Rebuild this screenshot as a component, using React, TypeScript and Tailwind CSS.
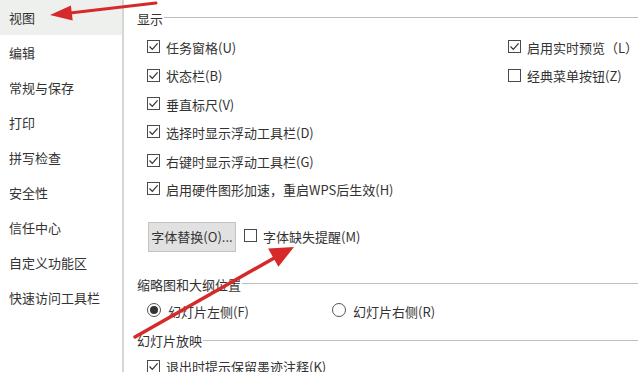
import React from "react";

const FONT = { fontFamily: '"Noto Sans CJK SC", "Noto Sans", sans-serif' };

function Check({ checked }: { checked: boolean }) {
  return (
    <span className="w-[13px] h-[13px] border border-[#4a4a4a] bg-white flex items-center justify-center shrink-0 relative -top-[1px]">
      {checked && (
        <svg width="11" height="11" viewBox="0 0 11 11">
          <path d="M1.5 5.5 L4.3 8.3 L9.6 2.3" fill="none" stroke="#333" strokeWidth="1.2" />
        </svg>
      )}
    </span>
  );
}

function Radio({ checked }: { checked: boolean }) {
  return (
    <span className="w-[14px] h-[14px] rounded-full border border-[#555] bg-white flex items-center justify-center shrink-0 relative -top-[1px]">
      {checked && <span className="w-[8px] h-[8px] rounded-full bg-[#333]" />}
    </span>
  );
}

function CheckRow({ label, checked = true }: { label: string; checked?: boolean }) {
  return (
    <div className="h-[28.4px] flex items-center gap-[6px]">
      <Check checked={checked} />
      <span>{label}</span>
    </div>
  );
}

function Heading({ label }: { label: string }) {
  return (
    <div className="h-[20px] flex items-center">
      <span className="pr-[1px]">{label}</span>
      <div className="flex-1 h-px bg-[#bdbdbd] relative -top-[1px]" />
    </div>
  );
}

const nav = ["视图", "编辑", "常规与保存", "打印", "拼写检查", "安全性", "信任中心", "自定义功能区", "快速访问工具栏"];

export default function App() {
  return (
    <div
      className="relative w-[638px] h-[372px] overflow-hidden bg-white flex text-[13px] text-[#333]"
      style={FONT}
    >
      <div className="w-[122px] shrink-0 flex flex-col">
        {nav.map((n, i) => (
          <div
            key={n}
            className={
              "h-[35px] flex items-center pl-[9px] " + (i === 0 ? "bg-[#eef0ee]" : "")
            }
          >
            {n}
          </div>
        ))}
      </div>
      <div className="w-[2px] shrink-0 bg-[#d6d6d6]" />
      <div className="flex-1 flex flex-col pl-[13px]">
        <div className="h-[9px] shrink-0" />
        <Heading label="显示" />
        <div className="h-[5px] shrink-0" />
        <div className="flex pl-[10px]">
          <div className="flex-1 flex flex-col">
            <CheckRow label="任务窗格(U)" />
            <CheckRow label="状态栏(B)" />
            <CheckRow label="垂直标尺(V)" />
            <CheckRow label="选择时显示浮动工具栏(D)" />
            <CheckRow label="右键时显示浮动工具栏(G)" />
            <CheckRow label="启用硬件图形加速，重启WPS后生效(H)" />
          </div>
          <div className="w-[130px] flex flex-col">
            <CheckRow label="启用实时预览（L）" />
            <CheckRow label="经典菜单按钮(Z)" checked={false} />
          </div>
        </div>
        <div className="mt-[18px] pl-[11px] flex items-center gap-[8px]">
          <div className="w-[88px] h-[30px] bg-[#e1e1e1] border border-[#c4c4c4] flex items-center justify-center">
            字体替换(O)...
          </div>
          <CheckRow label="字体缺失提醒(M)" checked={false} />
        </div>
        <div className="h-[23px] shrink-0" />
        <Heading label="缩略图和大纲位置" />
        <div className="mt-[3px] pl-[10px] flex">
          <div className="w-[185px] h-[28px] flex items-center gap-[7px]">
            <Radio checked />
            <span>幻灯片左侧(F)</span>
          </div>
          <div className="h-[28px] flex items-center gap-[7px]">
            <Radio checked={false} />
            <span>幻灯片右侧(R)</span>
          </div>
        </div>
        <div className="h-[6px] shrink-0" />
        <Heading label="幻灯片放映" />
        <div className="pl-[10px] mt-[2px]">
          <CheckRow label="退出时提示保留墨迹注释(K)" />
        </div>
      </div>
      <svg className="absolute left-0 top-0 pointer-events-none" width="638" height="372">
        <line x1="156" y1="3" x2="70" y2="13" stroke="#d62a2a" strokeWidth="3" strokeLinecap="round" />
        <polygon points="50,15 72.7,20.4 70.9,5.6" fill="#d62a2a" />
        <line x1="135" y1="337" x2="276" y2="257" stroke="#d62a2a" strokeWidth="3.5" strokeLinecap="round" />
        <polygon points="294,247 278.4,266.8 268.1,248.5" fill="#d62a2a" />
      </svg>
    </div>
  );
}
